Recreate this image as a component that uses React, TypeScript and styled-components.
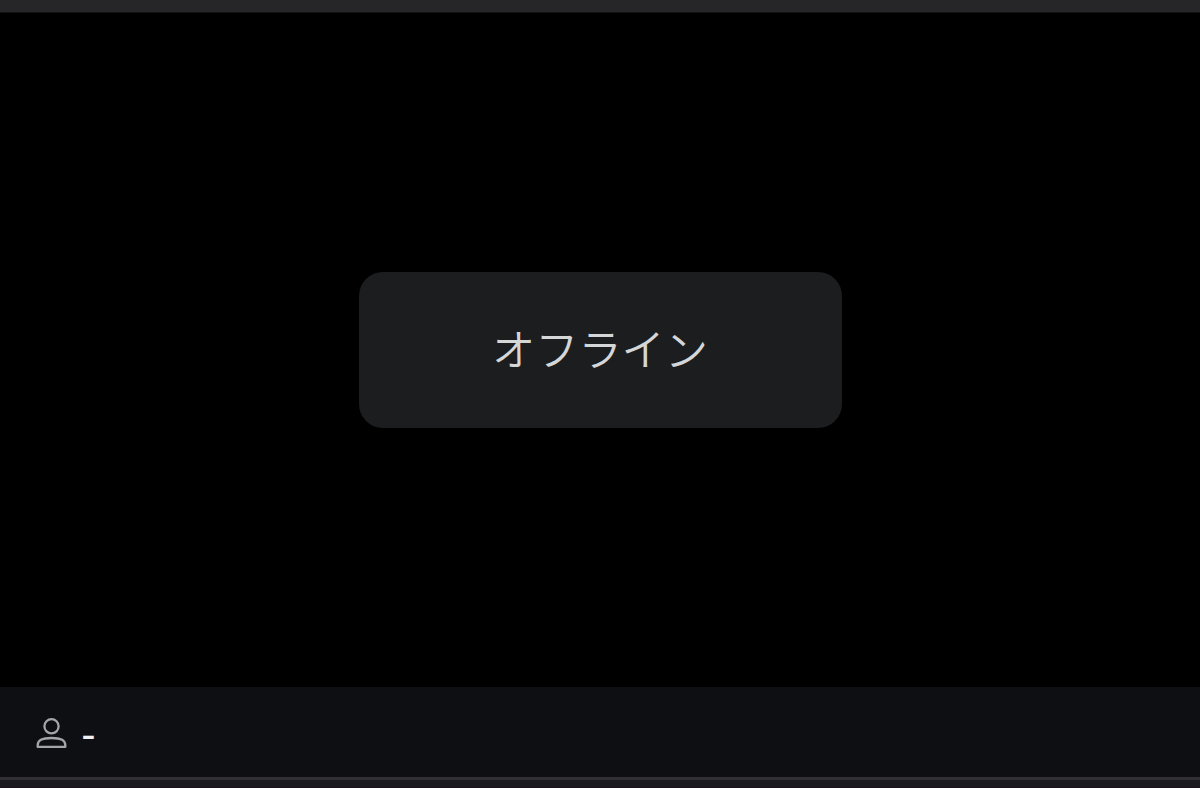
import styled, { createGlobalStyle } from "styled-components";

const GlobalStyle = createGlobalStyle`
  * {
    box-sizing: border-box;
  }

  body {
    margin: 0;
    background-color: #000;
  }
`

const Main = styled.main`
  display: flex;
  flex-direction: column;
  width: 100%;
  height: 100vh;
  overflow: hidden;
`

const TopBar = styled.div`
  flex: none;
  height: 13px;
  background-color: #262628;
  border-bottom: 1px solid #121214;
`

const Screen = styled.section`
  flex: 1;
  display: flex;
  align-items: center;
  justify-content: center;
  background-color: #000;
`

const StatusBox = styled.div`
  display: flex;
  align-items: center;
  justify-content: center;
  width: 483px;
  height: 156px;
  padding-bottom: 6px;
  border-radius: 24px;
  background-color: #1c1d1f;
`

const StatusText = styled.p`
  margin: 0;
  color: #d5d6d8;
  font-family: "Noto Sans CJK JP", sans-serif;
  font-size: 43.2px;
  font-weight: 350;
  line-height: 60px;
`

const InfoBar = styled.footer`
  flex: none;
  display: flex;
  align-items: center;
  gap: 13px;
  height: 90px;
  padding: 1px 36px 0;
  background-color: #0e0f13;
`

const ViewerIcon = styled.svg`
  width: 32px;
  height: 32px;
  fill: none;
  stroke: #a4a5a7;
  stroke-width: 2.3;
  stroke-linejoin: round;
`

const ViewerCount = styled.span`
  padding-top: 6px;
  color: #f0f0f1;
  font-family: Inter, sans-serif;
  font-size: 32px;
  font-weight: 600;
  line-height: 40px;
`

const BottomEdge = styled.div`
  flex: none;
  height: 11px;
  background-color: #1a1a1f;
  border-top: 3px solid #303034;
  border-bottom: 1px solid #1b111c;
`

function App() {
  return (
    <>
      <GlobalStyle />
      <Main>
        <TopBar />
        <Screen>
          <StatusBox>
            <StatusText>オフライン</StatusText>
          </StatusBox>
        </Screen>
        <InfoBar>
          <ViewerIcon viewBox="0 0 32 32">
            <circle cx="15.5" cy="9.3" r="7.1" />
            <path d="M1.7 29.9V28.3C1.7 23.2 5.5 21 15.5 21S29.3 23.2 29.3 28.3V29.9Z" />
          </ViewerIcon>
          <ViewerCount>-</ViewerCount>
        </InfoBar>
        <BottomEdge />
      </Main>
    </>
  );
}

export default App;
